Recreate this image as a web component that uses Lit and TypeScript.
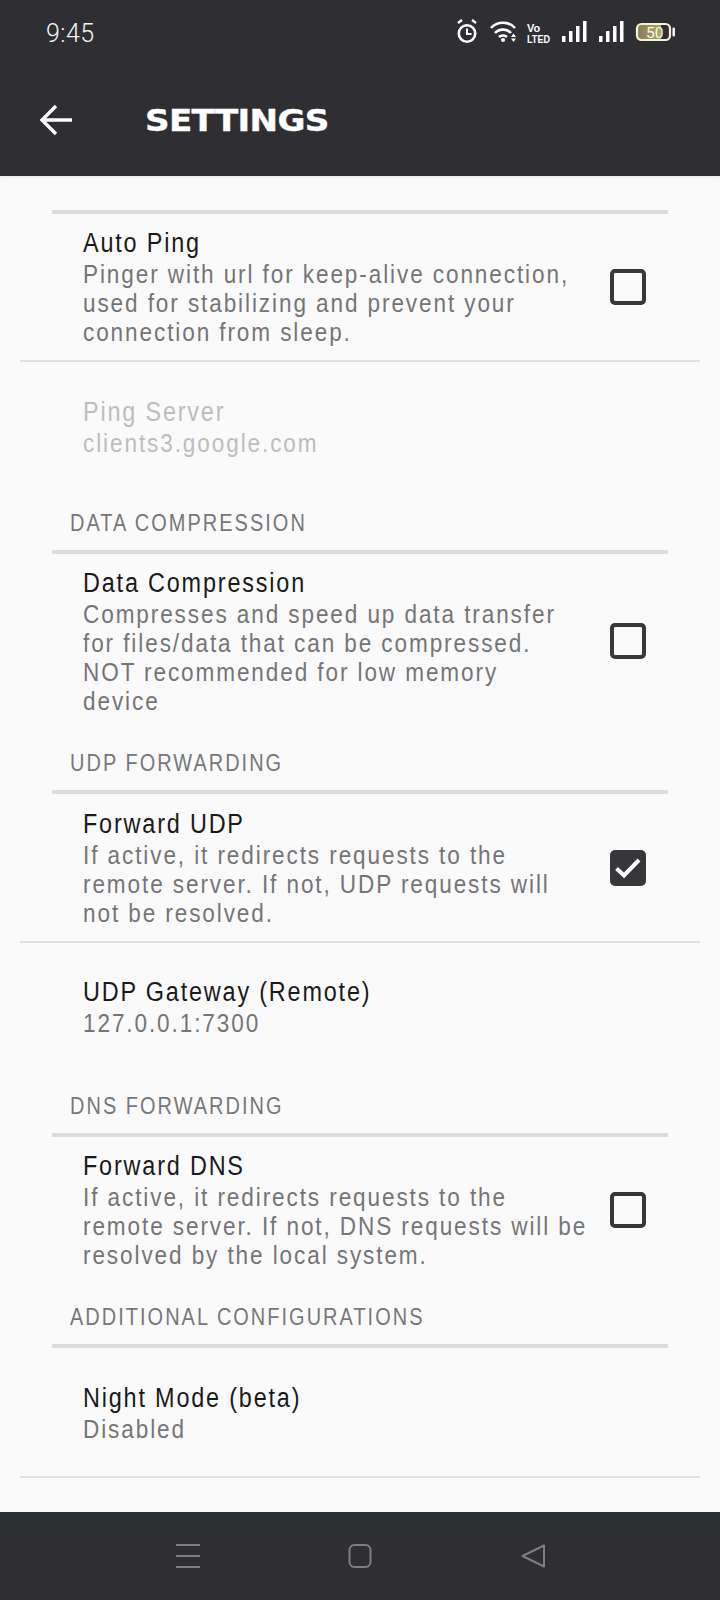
import { LitElement, html, css, svg, nothing } from "lit";
import { customElement } from "lit/decorators.js";

type Row = { title: string; lines: string[]; check?: boolean; checked?: boolean; disabled?: boolean };

@customElement("app-root")
class AppRoot extends LitElement {
  static styles = css`
    :host { display: block; width: 720px; height: 1600px; overflow: hidden; background: #fafafa; }
    .screen { height: 1600px; display: flex; flex-direction: column; font-family: "Liberation Sans", sans-serif; }
    .top { height: 176px; background: #2e2e33; color: #fff; display: flex; flex-direction: column; flex: none; position: relative; box-shadow: 0 1px 3px rgba(0, 0, 0, 0.08); }
    .status { height: 64px; display: flex; align-items: center; padding: 2px 44px 0 46px; box-sizing: border-box; justify-content: space-between; }
    .time { font-family: Roboto, sans-serif; font-weight: 300; font-size: 25px; letter-spacing: 0.4px; color: #f4f4f4; }
    .stat-icons { display: block; }
    .bar { flex: 1; display: flex; align-items: center; padding: 0 0 1px 39px; gap: 72px; }
    .bar svg { display: block; }
    .title { font-family: "DejaVu Sans", sans-serif; font-weight: 700; font-size: 31px; line-height: 36px; letter-spacing: -0.6px; -webkit-text-stroke: 0.4px #fff; transform: scaleX(1.1); transform-origin: left center; }
    .list { flex: 1; padding-top: 34px; }
    .cat { margin: 0 52px; }
    .cat-label { font-size: 23px; line-height: 26px; letter-spacing: 2.35px; color: #77777a; padding: 0 0 14px 18px; white-space: nowrap; transform: scaleX(0.867); transform-origin: 18px center; }
    .cat-line { height: 4px; background: #dcdcdc; }
    .row { display: flex; align-items: center; padding: 0 74px 0 83px; }
    .text { flex: 1; min-width: 0; white-space: nowrap; transform: scaleX(0.867); transform-origin: left center; }
    .row-title { font-size: 27px; line-height: 34px; letter-spacing: 2.1px; color: #1a1a1a; }
    .row-line { font-size: 26px; line-height: 29px; letter-spacing: 2.2px; color: #757578; }
    .disabled .row-title, .disabled .row-line { color: #bdbdbf; }
    .check { width: 36px; height: 36px; box-sizing: border-box; border: 4px solid #37373b; border-radius: 5px; flex: none; display: flex; align-items: center; justify-content: center; }
    .check.on { background: #37373b; }
    .divider { height: 2px; background: #e0e0e0; margin: 0 20px; }
    .nav { flex: none; height: 88px; background: linear-gradient(#2b3033, #2e2e33 24px); display: flex; align-items: flex-start; padding-top: 32px; box-sizing: border-box; }
    .nav svg { display: block; }
    .nav .i1 { margin-left: 176px; }
    .nav .i2 { margin-left: 148px; }
    .nav .i3 { margin-left: 149px; }
    .g12 { height: 12px; } .g13 { height: 13px; } .g32 { height: 32px; } .g33 { height: 33px; }
    .g34 { height: 34px; } .g52 { height: 52px; } .g55 { height: 55px; }
  `;

  private row(r: Row) {
    return html`<div class="row ${r.disabled ? "disabled" : ""}">
      <div class="text">
        <div class="row-title">${r.title}</div>
        ${r.lines.map((l) => html`<div class="row-line">${l}</div>`)}
      </div>
      ${r.check
        ? html`<div class="check ${r.checked ? "on" : ""}">
            ${r.checked
              ? html`<svg width="28" height="24" viewBox="0 0 28 24"><path d="M2.500 12.500 L10 19.500 L25 4" fill="none" stroke="#fff" stroke-width="4"/></svg>`
              : nothing}
          </div>`
        : nothing}
    </div>`;
  }

  private cat(label?: string) {
    return html`<div class="cat">
      ${label ? html`<div class="cat-label">${label}</div>` : nothing}
      <div class="cat-line"></div>
    </div>`;
  }

  private statusIcons() {
    const bars = (x: number) => svg`
      <rect x="${x}" y="21" width="3.500" height="6" fill="#fff"/>
      <rect x="${x + 7}" y="16" width="3.500" height="11" fill="#fff"/>
      <rect x="${x + 14}" y="11" width="3.500" height="16" fill="#fff"/>
      <rect x="${x + 21}" y="6" width="3.500" height="21" fill="#fff"/>`;
    return html`<svg class="stat-icons" width="220" height="36" viewBox="0 0 220 36">
      <defs>
        <linearGradient id="batt" x1="0" x2="1" y1="0" y2="0">
          <stop offset="0" stop-color="#8a7a58"/>
          <stop offset="1" stop-color="#a9a86c"/>
        </linearGradient>
      </defs>
      <g fill="none" stroke="#fff" stroke-width="2.600">
        <circle cx="11" cy="18.500" r="8.200"/>
        <path d="M11 13.500 V19 H15.500" stroke-width="2"/>
        <path d="M2 8 L6 5 M20 8 L16 5" stroke-width="2.400"/>
      </g>
      <g fill="none" stroke="#fff" stroke-width="2.600">
        <path d="M35 13 C41 6 53 6 59 13"/>
        <path d="M39 18 C43 13.500 51 13.500 55 18"/>
        <path d="M43 22 C45 20 49 20 51 22"/>
      </g>
      <circle cx="47" cy="25" r="2.100" fill="#fff"/>
      <path d="M55 22 l2.500 -3.500 l2.500 3.500 z M55 23.500 l2.500 3.500 l2.500 -3.500 z" fill="#fff"/>
      <text x="71" y="17" font-family="Liberation Sans" font-weight="700" font-size="11" fill="#fff">Vo</text>
      <text x="71" y="28" font-family="Liberation Sans" font-weight="700" font-size="10.500" fill="#fff" textLength="23" lengthAdjust="spacingAndGlyphs">LTED</text>
      ${bars(106)}
      ${bars(143)}
      <path d="M184 9 H205 V25 H184 Q181 25 181 22 V12 Q181 9 184 9 Z" fill="url(#batt)"/>
      <rect x="181" y="9" width="33" height="16" rx="4.500" fill="none" stroke="#f6f2d8" stroke-width="2.200"/>
      <text x="190" y="22.500" font-family="Roboto" font-weight="400" font-size="15.500" fill="#fbfae6">50</text>
      <rect x="216.500" y="12.500" width="2.400" height="9" rx="1" fill="#fff"/>
    </svg>`;
  }

  render() {
    return html`<div class="screen">
      <div class="top">
        <div class="status">
          <span class="time">9:45</span>
          ${this.statusIcons()}
        </div>
        <div class="bar">
          <svg width="34" height="34" viewBox="0 0 34 34"><path d="M2.500 17 H33 M17 3 L3 17 L17 31" fill="none" stroke="#fff" stroke-width="3.400"/></svg>
          <div class="title">SETTINGS</div>
        </div>
      </div>
      <div class="list">
        ${this.cat()}
        <div class="g12"></div>
        ${this.row({ title: "Auto Ping", check: true, lines: ["Pinger with url for keep-alive connection,", "used for stabilizing and prevent your", "connection from sleep."] })}
        <div class="g13"></div>
        <div class="divider"></div>
        <div class="g33"></div>
        ${this.row({ title: "Ping Server", disabled: true, lines: ["clients3.google.com"] })}
        <div class="g52"></div>
        ${this.cat("DATA COMPRESSION")}
        <div class="g12"></div>
        ${this.row({ title: "Data Compression", check: true, lines: ["Compresses and speed up data transfer", "for files/data that can be compressed.", "NOT recommended for low memory", "device"] })}
        <div class="g34"></div>
        ${this.cat("UDP FORWARDING")}
        <div class="g13"></div>
        ${this.row({ title: "Forward UDP", check: true, checked: true, lines: ["If active, it redirects requests to the", "remote server. If not, UDP requests will", "not be resolved."] })}
        <div class="g13"></div>
        <div class="divider"></div>
        <div class="g32"></div>
        ${this.row({ title: "UDP Gateway (Remote)", lines: ["127.0.0.1:7300"] })}
        <div class="g55"></div>
        ${this.cat("DNS FORWARDING")}
        <div class="g12"></div>
        ${this.row({ title: "Forward DNS", check: true, lines: ["If active, it redirects requests to the", "remote server. If not, DNS requests will be", "resolved by the local system."] })}
        <div class="g34"></div>
        ${this.cat("ADDITIONAL CONFIGURATIONS")}
        <div class="g33"></div>
        ${this.row({ title: "Night Mode (beta)", lines: ["Disabled"] })}
        <div class="g32"></div>
        <div class="divider"></div>
      </div>
      <div class="nav">
        <svg class="i1" width="24" height="24" viewBox="0 0 24 24"><path d="M0 1 H24 M0 12 H24 M0 23 H24" stroke="#7f7f83" stroke-width="2"/></svg>
        <svg class="i2" width="24" height="24" viewBox="0 0 24 24"><rect x="1.500" y="1" width="21" height="22" rx="5" fill="none" stroke="#7f7f83" stroke-width="2"/></svg>
        <svg class="i3" width="24" height="24" viewBox="0 0 24 24"><path d="M23 1.500 V22.500 L1.500 12 Z" fill="none" stroke="#7f7f83" stroke-width="2" stroke-linejoin="round"/></svg>
      </div>
    </div>`;
  }
}
